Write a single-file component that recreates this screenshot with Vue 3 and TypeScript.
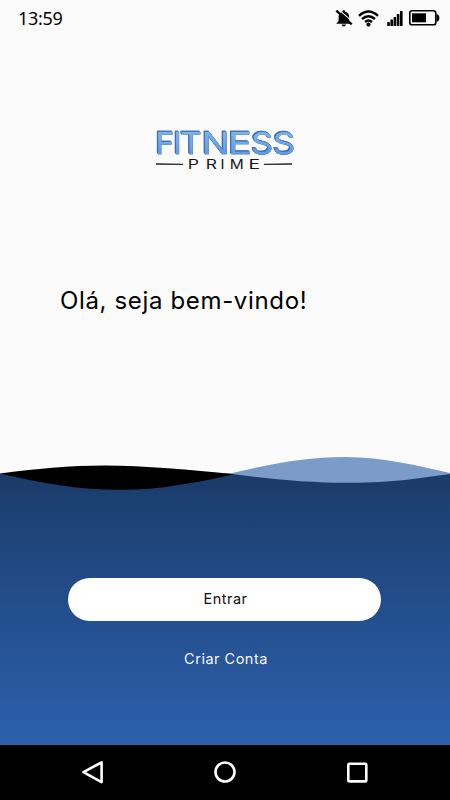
<script setup lang="ts">
interface Letter {
  char: string
  x: number
  width: number
}

const time: string = '13:59'
const greeting: string = 'Olá, seja bem-vindo!'
const bars = [4, 6.5, 9, 12, 15].map((h, i) => ({ x: 0.2 + i * 3.2, y: 15 - h, h }))
const letters: Letter[] = [
  { char: 'F', x: 2.2, width: 19.2 },
  { char: 'I', x: 20.2, width: 8.5 },
  { char: 'T', x: 27.2, width: 21.5 },
  { char: 'N', x: 48.8, width: 28 },
  { char: 'E', x: 74.8, width: 24.3 },
  { char: 'S', x: 98, width: 22.3 },
  { char: 'S', x: 119.8, width: 22.6 }
]
const subLetters: Letter[] = [
  { char: 'P', x: 34.7, width: 11.2 },
  { char: 'R', x: 52.8, width: 11.2 },
  { char: 'I', x: 67.4, width: 4 },
  { char: 'M', x: 76.8, width: 14 },
  { char: 'E', x: 95.4, width: 11.6 }
]
</script>

<template>
  <div class="screen">
    <header class="status">
      <span class="time">{{ time }}</span>
      <div class="indicators">
        <svg class="bell" width="18" height="19" viewBox="0 0 18 19">
          <path d="M4.6 4.7C5.6 3.6 6.6 3 7.4 2.7C7.4.8 10.2.8 10.2 2.7C13.1 3.6 14.2 5.6 14.2 8.2V11.8L16.6 14.8H1.2L3.6 12V8C3.6 6.5 3.9 5.5 4.6 4.7Z" />
          <path d="M6.6 15.5H11Q10.6 17.6 8.8 17.6T6.6 15.5Z" />
          <path class="gap" d="M3.4 .2L18 13.2" />
          <path class="slash" d="M1.3 1.6L16.8 15.4" />
        </svg>
        <svg class="wifi" width="21" height="17" viewBox="0 0 21 17">
          <path d="M1 5.8Q10.5-2.6 20 5.8M4 9Q10.5 3.3 17 9M7.1 12Q10.5 9 13.9 12" />
          <circle cx="10.5" cy="14.6" r="2.1" />
        </svg>
        <svg class="signal" width="16" height="15" viewBox="0 0 16 15">
          <rect v-for="b in bars" :key="b.x" :x="b.x" :y="b.y" width="2.6" :height="b.h" rx=".6" />
        </svg>
        <svg class="battery" width="31" height="16" viewBox="0 0 31 16">
          <rect class="case" x=".8" y=".8" width="26" height="14" rx="2.4" />
          <rect x="3" y="3.3" width="14" height="9" />
          <path d="M27.5 4Q30.4 4.5 30.4 8T27.5 12Z" />
        </svg>
      </div>
    </header>

    <main class="welcome">
      <svg class="logo" width="144" height="52" viewBox="0 -4 144 52" role="img" aria-label="Fitness Prime">
        <defs>
          <linearGradient id="steel" gradientUnits="userSpaceOnUse" x1="0" y1="4" x2="0" y2="28">
            <stop offset="0" stop-color="#7eb5f3" />
            <stop offset="1" stop-color="#5f9bea" />
          </linearGradient>
        </defs>
        <text class="brand" y="27.6"><tspan v-for="(l, i) in letters" :key="i" :x="l.x" :textLength="l.width" lengthAdjust="spacingAndGlyphs">{{ l.char }}</tspan></text>
        <text class="sub" y="42.7"><tspan v-for="(l, i) in subLetters" :key="i" :x="l.x" :textLength="l.width" lengthAdjust="spacingAndGlyphs">{{ l.char }}</tspan></text>
        <path class="rule" d="M3 37.8L30 38.2V38.5L3 38.2ZM111 38.2L139 37.8V38.2L111 38.5Z" />
      </svg>
      <h1>{{ greeting }}</h1>
    </main>

    <section class="actions">
      <svg class="waves" width="450" height="36" viewBox="0 0 450 36">
        <path fill="#7b9bc8" d="M228 19C270 9 306 2 345 2S418 11 450 18V30H228Z" />
        <path fill="#1b3c6b" d="M0 18.5H228C270 24 306 27.8 350 27.8S420 23 450 19V36H0Z" />
        <path fill="#000" d="M0 18.5C35 14 70 10.5 105 10.5C145 10.5 190 15 234 19.2C195 28 160 34.8 120 34.8S45 29 0 18.5Z" />
      </svg>
      <button class="enter" type="button">Entrar</button>
      <a class="signup">Criar Conta</a>
    </section>

    <nav class="system">
      <svg width="24" height="26" viewBox="0 0 24 26"><path d="M2.4 12.2L20.6 2.3V22.1Z" /></svg>
      <svg width="24" height="26" viewBox="0 0 24 26"><circle cx="12" cy="12" r="9.5" /></svg>
      <svg width="24" height="26" viewBox="0 0 24 26"><rect x="3.3" y="3.8" width="18" height="17.6" rx="1" /></svg>
    </nav>
  </div>
</template>

<style>
body {
  margin: 0;
}
</style>

<style scoped>
.screen {
  width: 450px;
  height: 800px;
  display: flex;
  flex-direction: column;
  overflow: hidden;
  background: #fbfbfb;
  font-family: Inter, "Liberation Sans", sans-serif;
  color: #000;
}
.status {
  height: 37px;
  box-sizing: border-box;
  padding: 0 10px 0 18px;
  display: flex;
  align-items: center;
  justify-content: space-between;
}
.time {
  font: 18px/24px "Noto Sans", sans-serif;
  letter-spacing: -0.3px;
  padding-bottom: 1px;
}
.indicators {
  display: flex;
  align-items: center;
}
.bell {
  margin-bottom: 1px;
}
.wifi {
  margin: 0 1px 1px 5px;
}
.signal {
  margin-left: 7px;
}
.battery {
  margin: 0 0 1px 6px;
}
.gap {
  stroke: #fbfbfb;
  stroke-width: 1.1;
}
.slash {
  stroke: #000;
  stroke-width: 2.2;
}
.wifi path {
  fill: none;
  stroke: #000;
  stroke-width: 2.4;
}
.case {
  fill: none;
  stroke: #000;
  stroke-width: 1.6;
}
.welcome {
  height: 418px;
  display: flex;
  flex-direction: column;
}
.logo {
  margin: 85px 0 0 153px;
}
.brand {
  font-size: 30px;
  font-weight: 400;
  fill: url(#steel);
  stroke: url(#steel);
  stroke-width: 0.3;
  filter: drop-shadow(0.6px 0.6px 0 #1d3c6e) drop-shadow(-0.4px -0.3px 0 #456d9f);
}
.sub {
  font-size: 12.5px;
  font-weight: 400;
  fill: #161616;
}
.rule {
  fill: #222;
  stroke: #222;
  stroke-width: 0.8;
}
h1 {
  margin: 111px 0 0 60px;
  font-size: 24px;
  line-height: 32px;
  font-weight: 400;
  letter-spacing: 0.65px;
  white-space: nowrap;
}
.actions {
  height: 290px;
  display: flex;
  flex-direction: column;
  align-items: center;
  background: linear-gradient(#fbfbfb 0 20px, #1b3c6b 20px, #2c60ad 100%);
}
.waves {
  flex: none;
}
.enter {
  width: 313px;
  height: 43px;
  margin: 87px 1px 0 0;
  padding: 0 0 2px 2px;
  border: 0;
  border-radius: 22px;
  background: #fff;
  font: 400 14.5px/20px Inter, sans-serif;
  letter-spacing: 0.5px;
  color: #111;
}
.signup {
  margin: 28px 0 0 2px;
  font-size: 14.5px;
  line-height: 20px;
  letter-spacing: 0.5px;
  color: #f2f5fb;
}
.system {
  height: 55px;
  display: flex;
  align-items: center;
  justify-content: space-between;
  padding: 0 81px;
  background: #000;
}
.system svg {
  fill: none;
  stroke: #fff;
  stroke-width: 2.6;
  stroke-linejoin: round;
}
</style>
